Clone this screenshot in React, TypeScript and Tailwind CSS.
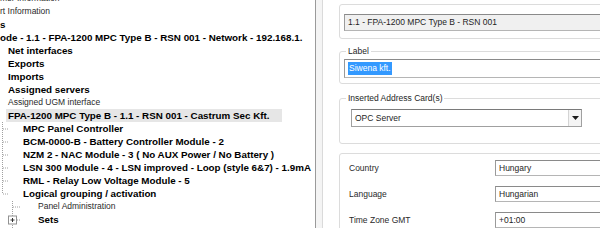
import React from 'react';

type Row = { text: string; pad: string; bold: boolean; selected?: boolean };

const rows: Row[] = [
  { text: 'mer Information', pad: 'pl-0', bold: false },
  { text: 'rt Information', pad: 'pl-0', bold: false },
  { text: 's', pad: 'pl-0', bold: true },
  { text: 'ode - 1.1 - FPA-1200 MPC Type B - RSN 001 - Network - 192.168.1.', pad: 'pl-0', bold: true },
  { text: 'Net interfaces', pad: 'pl-[8px]', bold: true },
  { text: 'Exports', pad: 'pl-[8px]', bold: true },
  { text: 'Imports', pad: 'pl-[8px]', bold: true },
  { text: 'Assigned servers', pad: 'pl-[8px]', bold: true },
  { text: 'Assigned UGM interface', pad: 'pl-[8px]', bold: false },
  { text: 'FPA-1200 MPC Type B - 1.1 - RSN 001 - Castrum Sec Kft.', pad: 'pl-[6px]', bold: true, selected: true },
  { text: 'MPC Panel Controller', pad: 'pl-[23px]', bold: true },
  { text: 'BCM-0000-B - Battery Controller Module - 2', pad: 'pl-[23px]', bold: true },
  { text: 'NZM 2 - NAC Module - 3 ( No AUX Power / No Battery )', pad: 'pl-[23px]', bold: true },
  { text: 'LSN 300 Module - 4 - LSN improved - Loop (style 6&7) - 1.9mA', pad: 'pl-[23px]', bold: true },
  { text: 'RML - Relay Low Voltage Module - 5', pad: 'pl-[23px]', bold: true },
  { text: 'Logical grouping / activation', pad: 'pl-[23px]', bold: true },
  { text: 'Panel Administration', pad: 'pl-[38px]', bold: false },
  { text: 'Sets', pad: 'pl-[38px]', bold: true },
];

// row centres: -1.5 + 13 * i
const cy = (i: number) => -1.5 + 13 * i;

const TreeLines = () => (
  <svg className="absolute left-0 top-0" width="40" height="228" viewBox="0 0 40 228">
    <g stroke="#a0a0a0" strokeWidth="1" strokeDasharray="1 1" fill="none">
      <line x1="2.5" y1="122" x2="2.5" y2={cy(15)} />
      {[10, 11, 12, 13, 14, 15].map((i) => (
        <line key={i} x1="3" y1={cy(i) + 0.5} x2="9" y2={cy(i) + 0.5} />
      ))}
      <line x1="12.5" y1="201" x2="12.5" y2="228" />
      <line x1="13" y1={cy(16) + 0.5} x2="21" y2={cy(16) + 0.5} />
      <line x1="17" y1={cy(17) + 0.5} x2="21" y2={cy(17) + 0.5} />
    </g>
    <rect x="8.5" y={cy(17) - 3.5} width="8" height="8" fill="#fff" stroke="#919191" />
    <line x1="10.5" y1={cy(17) + 0.5} x2="14.5" y2={cy(17) + 0.5} stroke="#333" />
    <line x1="12.5" y1={cy(17) - 1.5} x2="12.5" y2={cy(17) + 2.5} stroke="#333" />
  </svg>
);

const GroupBox = ({ title, className, children }: { title?: string; className: string; children?: React.ReactNode }) => (
  <div className={`relative shrink-0 w-[300px] border border-[#dcdcdc] rounded-[3px] ${className}`}>
    {title && (
      <span className="absolute left-[6px] top-[-7px] bg-white px-[2px] text-[8.5px] leading-[12px] text-[#1e1e1e]">
        {title}
      </span>
    )}
    {children}
  </div>
);

const TextBox = ({ value, className }: { value: string; className: string }) => (
  <div
    className={`border border-[#b5b5b5] border-t-[#8a8a8a] border-l-[#9a9a9a] pl-[3px] text-[8.5px] text-[#1e1e1e] whitespace-nowrap flex items-center ${className}`}
  >
    {value}
  </div>
);

export default function App() {
  return (
    <div className="w-[600px] h-[228px] flex overflow-hidden bg-white font-['Liberation_Sans',Arial,sans-serif] text-black">
      {/* tree */}
      <div className="relative w-[316px] shrink-0 border-r border-[#9a9a9a] overflow-hidden">
        <div className="mt-[-8px] flex flex-col">
          {rows.map((r, i) => (
            <div key={i} className={`h-[13px] shrink-0 flex items-center whitespace-nowrap ${r.pad}`}>
              <span
                className={`h-[13px] leading-[13px] ${
                  r.bold ? 'text-[9.8px] font-bold' : 'text-[8.5px] text-[#2a2a2a]'
                } ${r.selected ? 'bg-[#e6e6e6] w-[276px] pl-[2px]' : ''}`}
              >
                {r.text}
              </span>
            </div>
          ))}
        </div>
        <TreeLines />
      </div>

      {/* splitter */}
      <div className="w-[7px] shrink-0 bg-[#f4f4f4] border-r border-[#dadada]" />

      {/* properties */}
      <div className="flex-1 overflow-hidden pl-[16px] flex flex-col">
        <GroupBox className="mt-[4px] h-[35px] pt-[9px] pl-[4px]">
          <TextBox value="1.1 - FPA-1200 MPC Type B - RSN 001" className="h-[17px] bg-[#f0f0f0]" />
        </GroupBox>

        <GroupBox title="Label" className="mt-[12px] h-[33px] pt-[7px] pl-[4px]">
          <div className="h-[19px] border border-[#b5b5b5] border-t-[#8a8a8a] border-l-[#9a9a9a] pl-[3px] flex items-center">
            <span className="bg-[#3399ff] text-white text-[8.5px] leading-[13px] px-[1px]">Siwena kft.</span>
          </div>
        </GroupBox>

        <GroupBox title="Inserted Address Card(s)" className="mt-[14px] h-[46px] pt-[10px] pl-[11px]">
          <div className="w-[231px] h-[18px] border border-[#a0a0a0] border-t-[#7a7a7a] bg-white flex items-center">
            <span className="flex-1 pl-[3px] text-[8.5px] text-[#1e1e1e]">OPC Server</span>
            <div className="w-[13px] h-[16px] border-l border-[#d4d4d4] bg-[#f4f4f4] flex items-center justify-center">
              <svg width="7" height="4" viewBox="0 0 7 4">
                <path d="M0 0 L7 0 L3.5 4 Z" fill="#1a1a1a" />
              </svg>
            </div>
          </div>
        </GroupBox>

        <GroupBox className="mt-[9px] h-[90px] pt-[6px] pl-[9px] flex flex-col gap-[10px]">
          {[
            ['Country', 'Hungary'],
            ['Language', 'Hungarian'],
            ['Time Zone GMT', '+01:00'],
          ].map(([label, value]) => (
            <div key={label} className="flex items-center h-[16px] shrink-0">
              <span className="w-[146px] text-[8.5px] text-[#2a2a2a]">{label}</span>
              <TextBox value={value} className="flex-1 h-[16px] bg-white" />
            </div>
          ))}
        </GroupBox>
      </div>
    </div>
  );
}
